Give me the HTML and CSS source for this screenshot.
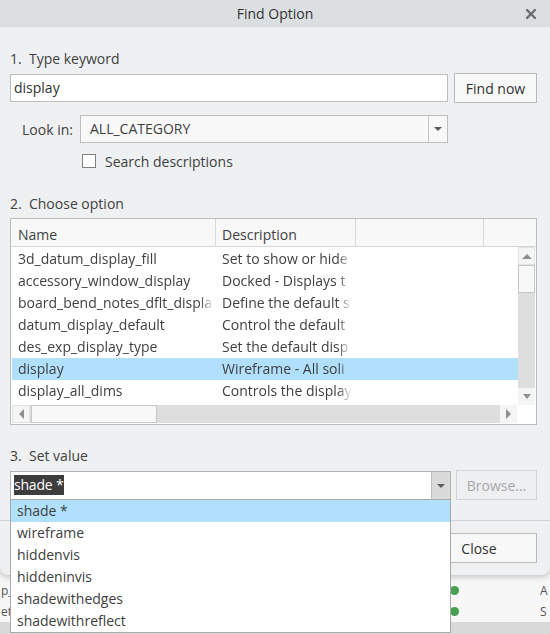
FILE: index.html
```html
<!DOCTYPE html>
<html>
<head>
<meta charset="utf-8">
<title>Find Option</title>
<link rel="stylesheet" href="styles.css">
</head>
<body>
<div class="screen">
  <div class="dialog">
    <div class="titlebar">
      <span></span>
      <span class="title">Find Option</span>
      <svg class="close-x" width="10" height="10" viewBox="0 0 10 10"><path d="M1 1 L9 9 M9 1 L1 9" stroke="#6e6e6e" stroke-width="2.4" stroke-linecap="square"/></svg>
    </div>
    <div class="content">
      <div class="step s1">1.&nbsp; Type keyword</div>
      <div class="keyword-row">
        <div class="textbox">display</div>
        <div class="btn find">Find now</div>
      </div>
      <div class="lookin-row">
        <span class="lookin-label">Look in:</span>
        <div class="select">
          <span class="select-text">ALL_CATEGORY</span>
          <span class="select-arrow"><span class="tri-down dark"></span></span>
        </div>
      </div>
      <div class="check-row">
        <span class="checkbox"></span>
        <span>Search descriptions</span>
      </div>
      <div class="step s2">2.&nbsp; Choose option</div>
      <div class="table">
        <div class="thead">
          <div class="th c-name">Name</div>
          <div class="th c-desc">Description</div>
          <div class="th c-3"></div>
          <div class="th c-4"></div>
        </div>
        <div class="tbody">
          <div class="rows">
            <div class="tr"><div class="td n">3d_datum_display_fill</div><div class="td d">Set to show or hide</div></div>
            <div class="tr"><div class="td n">accessory_window_display</div><div class="td d">Docked - Displays t</div></div>
            <div class="tr"><div class="td n">board_bend_notes_dflt_displa</div><div class="td d">Define the default s</div></div>
            <div class="tr"><div class="td n">datum_display_default</div><div class="td d">Control the default</div></div>
            <div class="tr"><div class="td n">des_exp_display_type</div><div class="td d">Set the default disp</div></div>
            <div class="tr selected"><div class="td n">display</div><div class="td d">Wireframe - All soli</div></div>
            <div class="tr"><div class="td n">display_all_dims</div><div class="td d">Controls the display</div></div>
          </div>
          <div class="vscroll">
            <div class="sb-btn v-up"><span class="tri-up"></span></div>
            <div class="v-thumb"></div>
            <div class="v-track"></div>
            <div class="sb-btn v-down"><span class="tri-down"></span></div>
          </div>
        </div>
        <div class="hscroll-row">
          <div class="hscroll">
            <div class="sb-btn h-left"><span class="tri-left"></span></div>
            <div class="h-thumb"></div>
            <div class="h-track"></div>
            <div class="sb-btn h-right"><span class="tri-right"></span></div>
          </div>
          <div class="corner"></div>
        </div>
      </div>
      <div class="step s3">3.&nbsp; Set value</div>
      <div class="value-row">
        <div class="combo">
          <span class="combo-text"><span class="sel-text">shade *</span></span>
          <span class="combo-arrow"><span class="tri-down dark"></span></span>
          <div class="dropdown">
            <div class="item active">shade *</div>
            <div class="item">wireframe</div>
            <div class="item">hiddenvis</div>
            <div class="item">hiddeninvis</div>
            <div class="item">shadewithedges</div>
            <div class="item">shadewithreflect</div>
          </div>
        </div>
        <div class="btn browse">Browse...</div>
      </div>
    </div>
    <div class="footer">
      <div class="btn close">Close</div>
    </div>
  </div>
  <div class="backdrop">
    <div class="bd-rows">
      <div class="bd-row"><span class="bd-left">p_f</span><span class="dot"></span><span class="bd-right">A</span></div>
      <div class="bd-row"><span class="bd-left">ete</span><span class="dot"></span><span class="bd-right">S</span></div>
    </div>
    <div class="bd-band"></div>
  </div>
</div>
</body>
</html>
```

FILE: styles.css
```css
* { box-sizing: border-box; }
html, body { margin: 0; padding: 0; }
body {
  width: 550px;
  height: 634px;
  overflow: hidden;
  background: #f3f3f3;
  font-family: "Open Sans", "Noto Sans", sans-serif;
  font-size: 14px;
  color: #404040;
}
.screen { width: 550px; height: 634px; display: flex; flex-direction: column; }

.dialog {
  height: 575px;
  flex: none;
  background: #eff0f2;
  border-radius: 0 0 8px 8px;
  box-shadow: 0 2px 6px rgba(0, 0, 0, 0.22);
  position: relative;
  z-index: 2;
}
.titlebar {
  height: 27px;
  background: #dcdfe2;
  display: grid;
  grid-template-columns: 1fr auto 1fr;
  align-items: center;
}
.title { font-size: 14px; color: #333; line-height: 20px; }
.close-x { justify-self: end; margin-right: 14px; }

.content { padding: 0 13px 0 10px; }
.step { line-height: 20px; height: 20px; }
.s1 { margin-top: 22px; }
.s2 { margin-top: 23px; }
.s3 { margin-top: 21px; }

.keyword-row { margin-top: 4px; height: 30px; display: flex; align-items: center; gap: 6px; }
.textbox {
  width: 438px; height: 28px;
  background: #fff; border: 1px solid #bdbdbd;
  padding-left: 3px; line-height: 26px; color: #333;
}
.btn {
  background: #f8f8f8; border: 1px solid #b9b9b9;
  display: flex; align-items: center; justify-content: center;
  color: #333;
}
.find { flex: 1; height: 30px; }

.lookin-row { margin-top: 12px; height: 28px; display: flex; align-items: center; }
.lookin-label { width: 70px; padding-left: 12px; }
.select {
  width: 368px; height: 28px;
  background: #f8f8f8; border: 1px solid #bdbdbd;
  display: flex;
}
.select-text { flex: 1; padding-left: 9px; line-height: 26px; }
.select-arrow { width: 19px; border-left: 1px solid #c8c8c8; display: flex; align-items: center; justify-content: center; }

.tri-down { width: 0; height: 0; border-left: 4px solid transparent; border-right: 4px solid transparent; border-top: 5px solid #8f8f8f; }
.tri-up { width: 0; height: 0; border-left: 5px solid transparent; border-right: 5px solid transparent; border-bottom: 5px solid #8f8f8f; }
.tri-left { width: 0; height: 0; border-top: 5px solid transparent; border-bottom: 5px solid transparent; border-right: 5px solid #8f8f8f; }
.tri-right { width: 0; height: 0; border-top: 5px solid transparent; border-bottom: 5px solid transparent; border-left: 5px solid #8f8f8f; }
.tri-down.dark { border-top-color: #5c5c5c; border-left-width: 4px; border-right-width: 4px; border-top-width: 4px; }

.check-row { margin-top: 8px; height: 20px; display: flex; align-items: center; padding-left: 72px; gap: 9px; }
.checkbox { width: 14px; height: 14px; background: #fff; border: 1px solid #7f7f7f; }

.table {
  margin-top: 4px;
  width: 527px;
  border: 1px solid #bcbcbc;
  background: #fff;
  padding-bottom: 1px;
}
.thead { height: 28px; display: flex; background: #f8f8f8; border-bottom: 1px solid #d6d6d6; }
.th { border-right: 1px solid #d9d9d9; line-height: 27px; padding-top: 2px; }
.c-name { width: 205px; padding-left: 7px; }
.c-desc { width: 140px; padding-left: 6px; }
.c-3 { width: 128px; }
.c-4 { flex: 1; border-right: none; }

.tbody { height: 158px; display: flex; padding-left: 1px; }
.rows { width: 506px; padding-top: 1px; }
.tr { height: 22px; display: flex; line-height: 22px; }
.tr.selected { background: #b0e0fc; }
.td { white-space: nowrap; overflow: hidden; -webkit-mask-image: linear-gradient(to right, #000 calc(100% - 16px), transparent calc(100% - 2px)); mask-image: linear-gradient(to right, #000 calc(100% - 16px), transparent calc(100% - 2px)); }
.td.n { width: 204px; padding-left: 6px; }
.td.d { width: 138px; padding-left: 6px; }

.vscroll { width: 17px; display: flex; flex-direction: column; background: #dedede; }
.sb-btn { background: #f5f5f5; display: flex; align-items: center; justify-content: center; flex: none; }
.v-up { height: 18px; border: 1px solid #e2e2e2; }
.v-thumb { height: 28px; background: #f8f8f8; border: 1px solid #c6c6c6; margin-top: 0; }
.v-track { flex: 1; }
.v-down { height: 17px; }

.hscroll-row { height: 18px; display: flex; padding-left: 1px; }
.hscroll { width: 505px; display: flex; background: #dedede; }
.h-left { width: 18px; border: 1px solid #e2e2e2; }
.h-thumb { width: 126px; background: #f8f8f8; border: 1px solid #c6c6c6; margin-left: 1px; }
.h-track { flex: 1; }
.h-right { width: 17px; }
.corner { flex: 1; background: #fff; }

.value-row { margin-top: 4px; height: 30px; display: flex; align-items: flex-start; gap: 5px; }
.combo {
  width: 441px; height: 29px; margin-top: 1px;
  background: #fff; border: 1px solid #b3b3b3;
  display: flex; position: relative;
}
.combo-text { flex: 1; padding: 3px 0 0 3px; }
.sel-text { display: inline-block; background: #3d3d3d; color: #fff; line-height: 20px; padding: 0 1px 0 0; letter-spacing: -0.2px; }
.combo-arrow { width: 19px; background: #dadada; border-left: 1px solid #bfbfbf; display: flex; align-items: center; justify-content: center; }
.browse { flex: 1; height: 30px; color: #a8a8a8; background: #eeeff1; border-color: #d3d3d3; }

.dropdown {
  position: absolute;
  top: 100%; left: -1px; right: -1px;
  background: #fff;
  border: 1px solid #a9a9a9;
  z-index: 5;
}
.item { height: 22px; line-height: 22px; padding-left: 6px; color: #404040; }
.item.active { background: #b0e0fc; }

.footer { margin-top: 20px; border-top: 1px solid #d2d2d2; padding: 12px 13px 0 0; display: flex; justify-content: flex-end; }
.close { width: 116px; height: 30px; }

.backdrop { flex: 1; display: flex; flex-direction: column; background: #f7f7f7; }
.bd-rows { flex: 1; padding-top: 5px; }
.bd-row { height: 21px; display: flex; align-items: center; font-size: 12px; color: #555; }
.bd-left { width: 450px; padding-left: 1px; }
.dot { width: 9px; height: 9px; border-radius: 50%; background: #45a04f; margin-right: 81px; }
.bd-band { height: 17px; background: #d9d9d9; }
```
